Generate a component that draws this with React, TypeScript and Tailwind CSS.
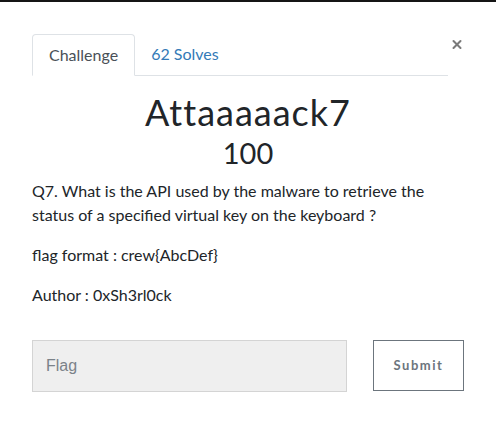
import { X } from "lucide-react";

const lato = { fontFamily: "Lato, 'Noto Sans', sans-serif" };

export default function App() {
  return (
    <div
      className="relative h-[440px] w-[496px] overflow-hidden bg-white text-[#212529]"
      style={lato}
    >
      {/* navbar behind the modal */}
      <div className="h-[2px] w-full bg-[#151515]" />

      <div className="px-[32px] pt-[32px]">
        {/* tabs + close */}
        <div className="flex items-start">
          <ul className="flex w-[420px] border-b border-[#dee2e6]">
            <li className="-mb-px rounded-t-[4px] border border-[#dee2e6] border-b-white bg-white px-4 py-2 text-[16px] leading-6 text-[#495057]">
              Challenge
            </li>
            <li className="px-4 py-2 text-[16px] leading-6 text-[#337ab7]">
              62 Solves
            </li>
          </ul>
          <button
            type="button"
            aria-label="Close"
            className="ml-[2px] mt-[3px] flex h-[14px] w-[14px] items-center justify-center text-[#7a7a7a]"
          >
            <X className="h-[15px] w-[15px]" strokeWidth={3.5} />
          </button>
        </div>

        {/* title */}
        <div className="mt-[15px] text-center">
          <h2 className="text-[36px] leading-[43px] tracking-[1px] text-[#212529]">
            Attaaaaack7
          </h2>
          <h3 className="mt-[1px] text-[29px] leading-[35px] text-[#212529]">
            100
          </h3>
        </div>

        {/* description */}
        <div className="mt-[9px] text-[16px] leading-6">
          <p>
            Q7. What is the API used by the malware to retrieve the status of a
            specified virtual key on the keyboard ?
          </p>
          <p className="mt-4">flag format : crew{"{AbcDef}"}</p>
          <p className="mt-4">Author : 0xSh3rl0ck</p>
        </div>

        {/* submission */}
        <div className="mt-[33px] flex items-start">
          <input
            type="text"
            placeholder="Flag"
            className="h-[52px] w-[318px] border border-[#d4d4d4] bg-[#efefef] px-[13px] text-[16px] text-[#495057] placeholder:text-[#7b8289] focus:outline-none"
            style={{ fontFamily: "'Liberation Sans', Arial, sans-serif" }}
          />
          <button
            type="button"
            className="ml-[26px] h-[51px] w-[92px] border border-[#6c757d] bg-white text-[13px] font-bold tracking-[1.5px] text-[#6c757d]"
          >
            Submit
          </button>
        </div>
      </div>
    </div>
  );
}
